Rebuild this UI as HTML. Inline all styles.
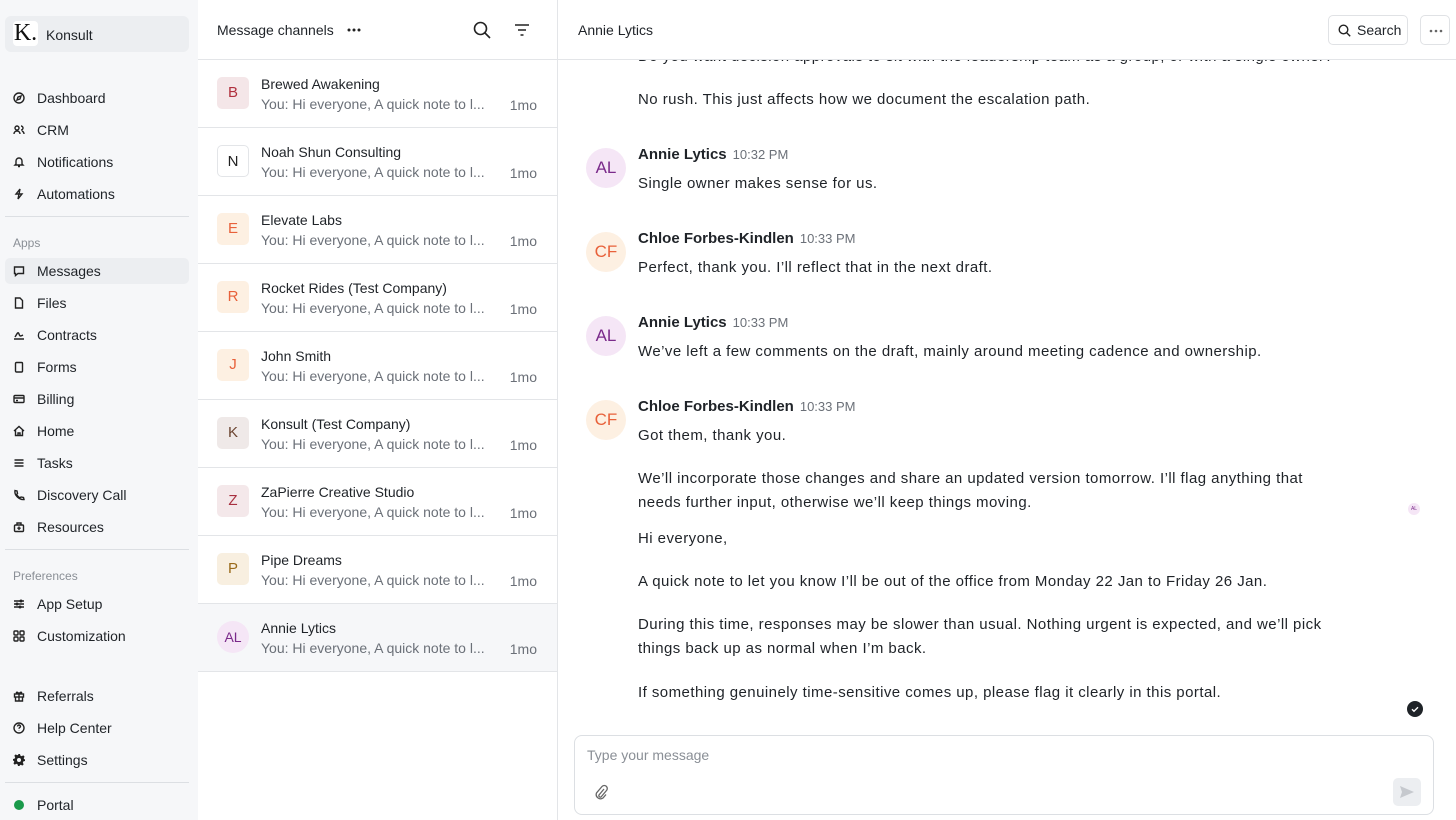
<!DOCTYPE html>
<html><head><meta charset="utf-8"><style>
*{box-sizing:border-box;margin:0;padding:0}
body{width:1456px;height:820px;overflow:hidden;font-family:"Liberation Sans",sans-serif;color:#1f2328;background:#fff;position:relative}
.sb{position:absolute;left:0;top:0;width:198px;height:820px;background:#f6f7f9}
.brand{position:absolute;left:5px;top:16px;width:184px;height:36px;background:#eceef1;border-radius:6px}
.brand .lg{position:absolute;left:8px;top:5px;width:25px;height:25px;background:#fff;border-radius:4px;font-family:"Liberation Serif",serif;font-size:24px;line-height:25px;text-align:center;color:#111}
.brand span{position:absolute;left:41px;top:11px;font-size:14px}
.it{position:absolute;left:5px;width:184px;height:26px;border-radius:5px;font-size:14px;color:#1f2328}
.it svg{position:absolute;left:8px;top:7px;width:12px;height:12px;fill:none;stroke:#222;stroke-width:1.4}
.it span{position:absolute;left:32px;top:5px}
.it.act{background:#eceef1}
.sec{position:absolute;left:13px;font-size:12px;color:#8a8f96}
.hr{position:absolute;left:5px;width:184px;height:1px;background:#dcdfe3}
.lp{position:absolute;left:198px;top:0;width:360px;height:820px;border-right:1px solid #e3e5e8;background:#fff}
.lh{height:60px;border-bottom:1px solid #e3e5e8;position:relative}
.lh .t{position:absolute;left:19px;top:22px;font-size:14px}
.row{position:relative;height:68px;border-bottom:1px solid #e3e5e8}
.row.sel{background:#f6f7f9}
.av{position:absolute;left:19px;top:17px;width:32px;height:32px;border-radius:5px;text-align:center;line-height:32px;font-size:15px}
.row .n{position:absolute;left:63px;top:16px;font-size:14px}
.row .p{position:absolute;left:63px;top:36px;font-size:14px;color:#6b7078}
.row .d{position:absolute;right:20px;top:37px;font-size:14px;color:#6b7078}
.ch{position:absolute;left:558px;top:0;width:898px;height:820px}
.chh{height:60px;border-bottom:1px solid #e3e5e8;position:relative;background:#fff;z-index:2}
.msg{position:absolute;left:80px;font-size:15px;color:#1f2328;line-height:24px;width:700px;letter-spacing:.45px}
.ca{position:absolute;left:28px;width:40px;height:40px;border-radius:50%;text-align:center;line-height:40px;font-size:17px}
.nm{position:absolute;left:80px;font-size:15px;font-weight:bold}
.nm i{font-style:normal;font-weight:normal;font-size:13px;color:#6b7078;margin-left:6px}
</style></head><body>
<div class="sb">
<div class="brand"><div class="lg">K.</div><span>Konsult</span></div>
<div class="it" style="top:85px"><svg viewBox="0 0 12 12"><circle cx="6" cy="6" r="5"/><path d="M4 8l1-3 3-1-1 3z"/></svg><span>Dashboard</span></div>
<div class="it" style="top:117px"><svg viewBox="0 0 12 12"><circle cx="4" cy="4" r="2"/><path d="M1 10c0-2 1.5-3 3-3s3 1 3 3M8 2a2 2 0 010 4M9 7c1 .5 2 1.5 2 3"/></svg><span>CRM</span></div>
<div class="it" style="top:149px"><svg viewBox="0 0 12 12"><path d="M3 8V5a3 3 0 016 0v3l1 1H2zM5 10.5h2"/></svg><span>Notifications</span></div>
<div class="it" style="top:181px"><svg viewBox="0 0 12 12"><path d="M7 1L3 6h3l-1 5 4-5H6z"/></svg><span>Automations</span></div>
<div class="hr" style="top:216px"></div>
<div class="sec" style="top:236px">Apps</div>
<div class="it act" style="top:258px"><svg viewBox="0 0 12 12"><path d="M1.5 2h9v6.5H5L2.5 10.5V8.5h-1z"/></svg><span>Messages</span></div>
<div class="it" style="top:290px"><svg viewBox="0 0 12 12"><path d="M2.5 1h4.5l2.5 2.5V11h-7z"/></svg><span>Files</span></div>
<div class="it" style="top:322px"><svg viewBox="0 0 12 12"><path d="M1 10h10M2 8c2-3 3-6 4-3s2 2 4 1"/></svg><span>Contracts</span></div>
<div class="it" style="top:354px"><svg viewBox="0 0 12 12"><rect x="2.5" y="1.5" width="7" height="9.5" rx="1"/></svg><span>Forms</span></div>
<div class="it" style="top:386px"><svg viewBox="0 0 12 12"><rect x="1" y="2.5" width="10" height="7" rx="1"/><path d="M1 5h10M3 7.5h2"/></svg><span>Billing</span></div>
<div class="it" style="top:418px"><svg viewBox="0 0 12 12"><path d="M1 6l5-4.5L11 6M2.5 5v5.5h7V5M5 10.5V8h2v2.5"/></svg><span>Home</span></div>
<div class="it" style="top:450px"><svg viewBox="0 0 12 12"><path d="M1.5 3h9M1.5 6h9M1.5 9h9"/></svg><span>Tasks</span></div>
<div class="it" style="top:482px"><svg viewBox="0 0 12 12"><path d="M2 1.5l2 .5 .5 2.5-1 1c1 1.5 2 2.5 3.5 3.5l1-1 2.5.5.5 2C6 11 1 6 2 1.5z"/></svg><span>Discovery Call</span></div>
<div class="it" style="top:514px"><svg viewBox="0 0 12 12"><rect x="1.5" y="4" width="9" height="6.5" rx="1"/><path d="M4 4V2h4v2M6 5.5v3.5M4.3 7.2h3.4"/></svg><span>Resources</span></div>
<div class="hr" style="top:549px"></div>
<div class="sec" style="top:569px">Preferences</div>
<div class="it" style="top:591px"><svg viewBox="0 0 12 12"><path d="M1 3h10M1 6h10M1 9h10"/><circle cx="8" cy="3" r=".8"/><circle cx="4" cy="6" r=".8"/><circle cx="7" cy="9" r=".8"/></svg><span>App Setup</span></div>
<div class="it" style="top:623px"><svg viewBox="0 0 12 12"><rect x="1" y="1" width="4" height="4" rx="1"/><rect x="7" y="1" width="4" height="4" rx="1"/><rect x="1" y="7" width="4" height="4" rx="1"/><rect x="7" y="7" width="4" height="4" rx="1"/></svg><span>Customization</span></div>
<div class="it" style="top:683px"><svg viewBox="0 0 12 12"><rect x="1.5" y="4" width="9" height="3"/><path d="M2.5 7v4h7V7M6 4v7M6 4C4 1 2.5 2.5 4 4M6 4c2-3 3.5-1.5 2 0"/></svg><span>Referrals</span></div>
<div class="it" style="top:715px"><svg viewBox="0 0 12 12"><circle cx="6" cy="6" r="5"/><path d="M4.5 4.5a1.5 1.5 0 113 0c0 1-1.5 1-1.5 2.3M6 8.5v.3"/></svg><span>Help Center</span></div>
<div class="it" style="top:747px"><svg viewBox="0 0 12 12" style="fill:#222;stroke:none"><path d="M5 0h2l.4 1.6 1.4.6 1.4-.9 1.4 1.4-.9 1.4.6 1.4L12 5v2l-1.6.4-.6 1.4.9 1.4-1.4 1.4-1.4-.9-1.4.6L7 12H5l-.4-1.6-1.4-.6-1.4.9L.4 9.3l.9-1.4-.6-1.4L0 7V5l1.6-.4.6-1.4-.9-1.4L2.7.4l1.4.9 1.4-.6z"/><circle cx="6" cy="6" r="2" fill="#f6f7f9"/></svg><span>Settings</span></div>
<div class="hr" style="top:782px"></div>
<div class="it" style="top:792px"><svg viewBox="0 0 12 12"><circle cx="6" cy="6" r="5" fill="#1a9a4b" stroke="none"/></svg><span>Portal</span></div>
</div>

<div class="lp">
<div class="lh"><span class="t">Message channels</span>
<svg style="position:absolute;left:149px;top:28px" width="14" height="4" viewBox="0 0 14 4" fill="#222"><circle cx="2" cy="2" r="1.5"/><circle cx="7" cy="2" r="1.5"/><circle cx="12" cy="2" r="1.5"/></svg>
<svg style="position:absolute;left:275px;top:21px" width="18" height="18" viewBox="0 0 18 18" fill="none" stroke="#222" stroke-width="1.6"><circle cx="7.5" cy="7.5" r="6"/><path d="M12 12l5 5"/></svg>
<svg style="position:absolute;left:316px;top:22px" width="16" height="16" viewBox="0 0 16 16" fill="none" stroke="#222" stroke-width="1.4"><path d="M1 3h14M4 8h8M6.5 13h3"/></svg></div>
<div class="row"><div class="av" style="background:#f4e6e8;color:#b0303e">B</div><div class="n">Brewed Awakening</div><div class="p">You: Hi everyone, A quick note to l...</div><div class="d">1mo</div></div>
<div class="row"><div class="av" style="background:#fff;border:1px solid #e3e5e8;color:#222">N</div><div class="n">Noah Shun Consulting</div><div class="p">You: Hi everyone, A quick note to l...</div><div class="d">1mo</div></div>
<div class="row"><div class="av" style="background:#fdf0e2;color:#e8613a">E</div><div class="n">Elevate Labs</div><div class="p">You: Hi everyone, A quick note to l...</div><div class="d">1mo</div></div>
<div class="row"><div class="av" style="background:#fdf0e2;color:#e8613a">R</div><div class="n">Rocket Rides (Test Company)</div><div class="p">You: Hi everyone, A quick note to l...</div><div class="d">1mo</div></div>
<div class="row"><div class="av" style="background:#fdf0e2;color:#e8613a">J</div><div class="n">John Smith</div><div class="p">You: Hi everyone, A quick note to l...</div><div class="d">1mo</div></div>
<div class="row"><div class="av" style="background:#efe9e8;color:#6b4430">K</div><div class="n">Konsult (Test Company)</div><div class="p">You: Hi everyone, A quick note to l...</div><div class="d">1mo</div></div>
<div class="row"><div class="av" style="background:#f4e8ea;color:#a83040">Z</div><div class="n">ZaPierre Creative Studio</div><div class="p">You: Hi everyone, A quick note to l...</div><div class="d">1mo</div></div>
<div class="row"><div class="av" style="background:#f8efe0;color:#9a6a1a">P</div><div class="n">Pipe Dreams</div><div class="p">You: Hi everyone, A quick note to l...</div><div class="d">1mo</div></div>
<div class="row sel"><div class="av" style="background:#f5e6f6;color:#7a2a8a;border-radius:50%;font-size:14px">AL</div><div class="n">Annie Lytics</div><div class="p">You: Hi everyone, A quick note to l...</div><div class="d">1mo</div></div>
</div>

<div class="ch">
<div class="chh"><span style="position:absolute;left:20px;top:22px;font-size:14px">Annie Lytics</span>
<div style="position:absolute;left:770px;top:15px;width:80px;height:30px;border:1px solid #e0e2e5;border-radius:5px;font-size:14px"><svg style="position:absolute;left:9px;top:8px" width="13" height="13" viewBox="0 0 13 13" fill="none" stroke="#222" stroke-width="1.4"><circle cx="5.5" cy="5.5" r="4.3"/><path d="M8.7 8.7l3.5 3.5"/></svg><span style="position:absolute;left:28px;top:6px">Search</span></div>
<div style="position:absolute;left:862px;top:15px;width:30px;height:30px;border:1px solid #e0e2e5;border-radius:5px"><svg style="position:absolute;left:8px;top:13px" width="14" height="4" viewBox="0 0 14 4" fill="#666"><circle cx="2" cy="2" r="1.3"/><circle cx="7" cy="2" r="1.3"/><circle cx="12" cy="2" r="1.3"/></svg></div>
</div>
<div class="msg" style="top:45px;width:760px;white-space:nowrap">Do you want decision approvals to sit with the leadership team as a group, or with a single owner?</div>
<div class="msg" style="top:88px">No rush. This just affects how we document the escalation path.</div>

<div class="ca" style="top:148px;background:#f5e6f6;color:#7a2a8a">AL</div>
<div class="nm" style="top:146px">Annie Lytics<i>10:32 PM</i></div>
<div class="msg" style="top:172px">Single owner makes sense for us.</div>

<div class="ca" style="top:232px;background:#fdf0e2;color:#e8613a">CF</div>
<div class="nm" style="top:230px">Chloe Forbes-Kindlen<i>10:33 PM</i></div>
<div class="msg" style="top:256px">Perfect, thank you. I’ll reflect that in the next draft.</div>

<div class="ca" style="top:316px;background:#f5e6f6;color:#7a2a8a">AL</div>
<div class="nm" style="top:314px">Annie Lytics<i>10:33 PM</i></div>
<div class="msg" style="top:340px;width:720px">We’ve left a few comments on the draft, mainly around meeting cadence and ownership.</div>

<div class="ca" style="top:400px;background:#fdf0e2;color:#e8613a">CF</div>
<div class="nm" style="top:398px">Chloe Forbes-Kindlen<i>10:33 PM</i></div>
<div class="msg" style="top:424px">Got them, thank you.</div>
<div class="msg" style="top:467px">We’ll incorporate those changes and share an updated version tomorrow. I’ll flag anything that needs further input, otherwise we’ll keep things moving.</div>
<div style="position:absolute;left:850px;top:503px;width:12px;height:12px;border-radius:50%;background:#f5e6f6;color:#7a2a8a;font-size:5px;line-height:12px;text-align:center">AL</div>
<div class="msg" style="top:527px">Hi everyone,</div>
<div class="msg" style="top:570px">A quick note to let you know I’ll be out of the office from Monday 22 Jan to Friday 26 Jan.</div>
<div class="msg" style="top:613px">During this time, responses may be slower than usual. Nothing urgent is expected, and we’ll pick things back up as normal when I’m back.</div>
<div class="msg" style="top:681px">If something genuinely time-sensitive comes up, please flag it clearly in this portal.</div>
<svg style="position:absolute;left:849px;top:701px" width="16" height="16" viewBox="0 0 16 16"><circle cx="8" cy="8" r="8" fill="#1f2328"/><path d="M5 8.2l2 2 4-4" fill="none" stroke="#fff" stroke-width="1.4"/></svg>

<div style="position:absolute;left:16px;top:735px;width:860px;height:80px;border:1px solid #dcdfe3;border-radius:8px;background:#fff">
<span style="position:absolute;left:12px;top:11px;font-size:14px;color:#8a8f96">Type your message</span>
<svg style="position:absolute;left:19px;top:48px" width="14" height="16" viewBox="0 0 14 16" fill="none" stroke="#666" stroke-width="1.3"><path d="M10 5l-5 6a1.5 1.5 0 002 2l5.5-6.5a3 3 0 00-4.5-4L2.5 9a4.3 4.3 0 006.5 5l3-3.5"/></svg>
<div style="position:absolute;left:818px;top:42px;width:28px;height:28px;background:#eceef1;border-radius:5px"><svg style="position:absolute;left:6px;top:7px" width="16" height="14" viewBox="0 0 16 14"><path d="M1 1l14 6-14 6 2-6z" fill="#c6c9ce"/></svg></div>
</div>
</div>
</body></html>
